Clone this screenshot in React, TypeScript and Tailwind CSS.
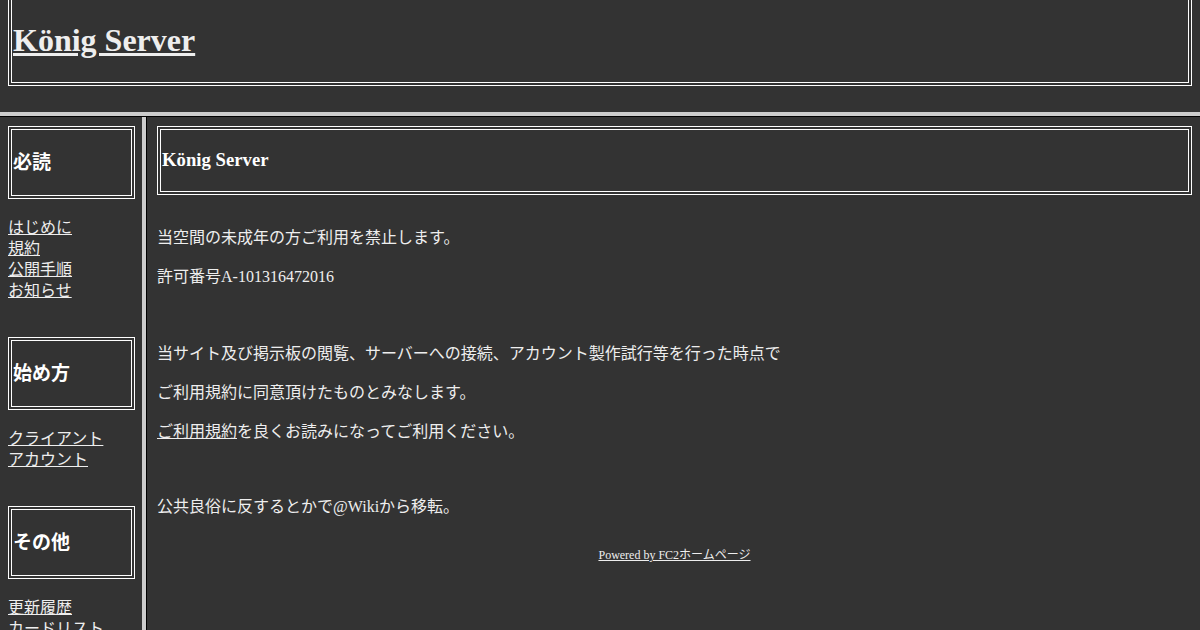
import React from 'react'

const font = { fontFamily: '"Liberation Serif", "Noto Sans CJK JP", serif' }

const sections = [
    { title: '必読', links: ['はじめに', '規約', '公開手順', 'お知らせ'] },
    { title: '始め方', links: ['クライアント', 'アカウント'] },
    { title: 'その他', links: ['更新履歴', 'カードリスト'] },
]

const SideSection: React.FC<{ title: string; links: string[] }> = ({ title, links }) => (
    <div className="mb-[36px]">
        <div className="h-[73px] border-4 border-double border-white flex items-center pl-[1px]">
            <h2 className="text-[19px] font-bold leading-none text-white">{title}</h2>
        </div>
        <ul className="mt-[18px] text-[16px] leading-[21px]">
            {links.map(l => (
                <li key={l}>
                    <a href="#" className="underline text-[#eeeeee]">{l}</a>
                </li>
            ))}
        </ul>
    </div>
)

export default function App() {
    return (
        <div className="w-[1200px] h-[630px] overflow-hidden bg-[#333333] text-[#eeeeee]" style={font}>
            {/* Header */}
            <div className="h-[112px] px-2">
                <div className="h-[86px] border-x-4 border-b-4 border-double border-white flex items-center pl-[1px] pb-[2px]">
                    <h1 className="text-[32px] font-bold leading-none">
                        <a href="#" className="underline text-[#eeeeee]">König Server</a>
                    </h1>
                </div>
            </div>
            <div className="h-[4px] bg-[#cccccc]" />
            <div className="h-px bg-black" />

            <div className="flex h-[513px]">
                {/* Sidebar */}
                <div className="w-[142px] shrink-0 pl-2 pr-[7px] pt-[9px]">
                    {sections.map(s => (
                        <SideSection key={s.title} title={s.title} links={s.links} />
                    ))}
                </div>
                <div className="w-[4px] bg-[#cccccc] shrink-0" />
                <div className="w-px bg-black shrink-0" />

                {/* Main */}
                <div className="flex-1 pl-[10px] pr-2 pt-[9px]">
                    <div className="h-[69px] border-4 border-double border-white flex items-center pl-[1px]">
                        <h3 className="text-[18.72px] font-bold leading-none text-white">König Server</h3>
                    </div>
                    <div className="text-[16px] leading-[23px] pt-[31px]">
                        <p>当空間の未成年の方ご利用を禁止します。</p>
                        <p className="mt-4">許可番号A-101316472016</p>
                        <p className="mt-[54px]">当サイト及び掲示板の閲覧、サーバーへの接続、アカウント製作試行等を行った時点で</p>
                        <p className="mt-4">ご利用規約に同意頂けたものとみなします。</p>
                        <p className="mt-4">
                            <a href="#" className="underline">ご利用規約</a>を良くお読みになってご利用ください。
                        </p>
                        <p className="mt-[52px]">公共良俗に反するとかで@Wikiから移転。</p>
                    </div>
                    <div className="text-center text-[12px] leading-[16px] mt-[29px]">
                        <a href="#" className="underline">Powered by FC2ホームページ</a>
                    </div>
                </div>
            </div>
        </div>
    )
}
